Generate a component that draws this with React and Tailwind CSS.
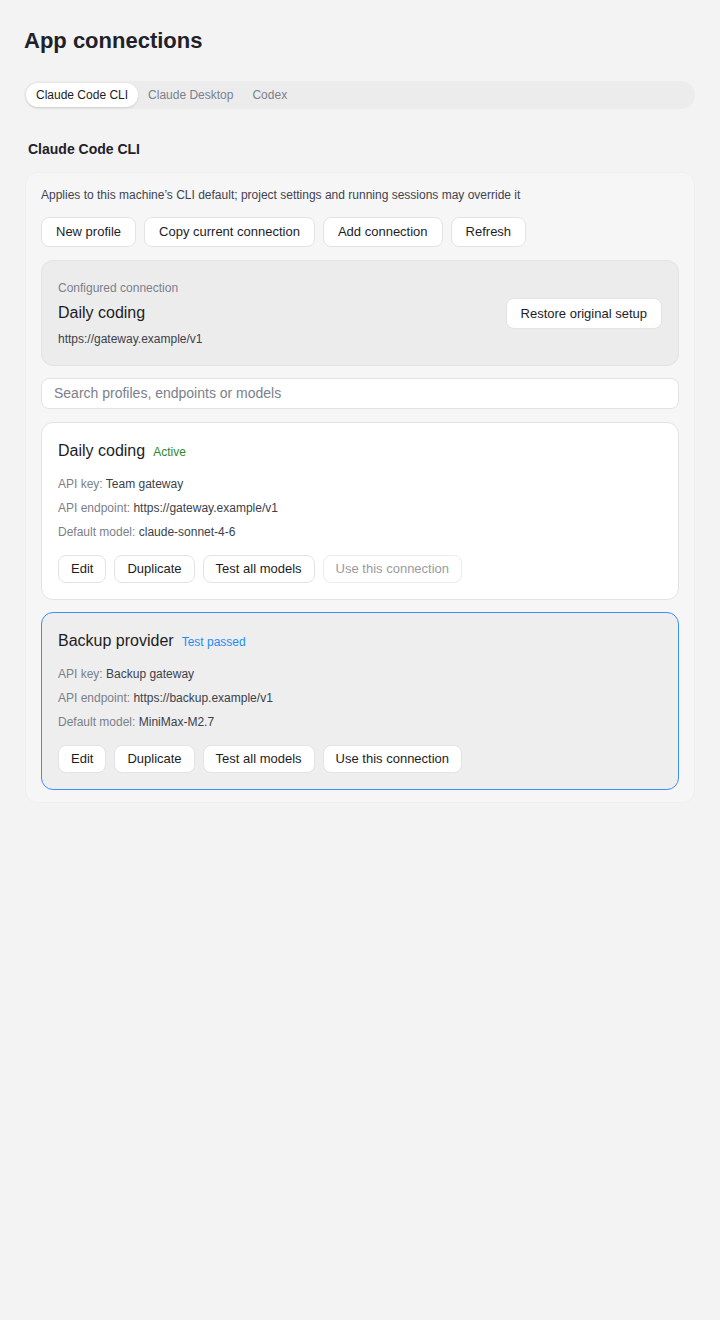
import React from 'react';

const font = { fontFamily: '"Liberation Sans", Arial, sans-serif' };

function Btn({ children }) {
  return (
    <button className="h-[30px] px-[14px] rounded-lg border border-[#e3e3e6] bg-white text-[13px] text-[#1d1d1f]">
      {children}
    </button>
  );
}

function SmallBtn({ children, disabled }) {
  return (
    <button
      className={`h-[28px] px-3 rounded-lg border bg-white text-[13px] ${
        disabled ? 'border-[#ececef] text-[#9a9aa0]' : 'border-[#e3e3e6] text-[#1d1d1f]'
      }`}
    >
      {children}
    </button>
  );
}

function Profile({ name, badge, badgeColor, apiKey, endpoint, model, selected, activeDisabled }) {
  return (
    <div
      className={`rounded-xl border px-4 pt-4 pb-4 ${
        selected ? 'border-[#3d8ef2] bg-[#eeeeee]' : 'border-[#e3e3e6] bg-white'
      }`}
    >
      <div className="flex items-baseline gap-2">
        <span className="text-[16px] text-[#1d1d1f]">{name}</span>
        <span className={`text-[12px] ${badgeColor}`}>{badge}</span>
      </div>
      <div className="mt-[13px] flex flex-col gap-[8px] text-[12px] leading-4">
        <div>
          <span className="text-[#7b7f8a]">API key: </span>
          <span className="text-[#3a3f4b]">{apiKey}</span>
        </div>
        <div>
          <span className="text-[#7b7f8a]">API endpoint: </span>
          <span className="text-[#3a3f4b]">{endpoint}</span>
        </div>
        <div>
          <span className="text-[#7b7f8a]">Default model: </span>
          <span className="text-[#3a3f4b]">{model}</span>
        </div>
      </div>
      <div className="mt-[15px] flex gap-2">
        <SmallBtn>Edit</SmallBtn>
        <SmallBtn>Duplicate</SmallBtn>
        <SmallBtn>Test all models</SmallBtn>
        <SmallBtn disabled={activeDisabled}>Use this connection</SmallBtn>
      </div>
    </div>
  );
}

export default function App() {
  return (
    <div style={font} className="min-h-[1320px] bg-[#f3f3f3] px-6 pt-[27px] pb-10 text-[#1d1d1f]">
      <h1 className="text-[22px] font-bold text-[#1f2128] leading-7">App connections</h1>

      <div className="mt-[26px] mr-[1px] flex items-center gap-[1px] rounded-full bg-[#ececec] p-[2px] h-[28px]">
        <div className="h-[24px] px-[10px] flex items-center rounded-full bg-white text-[12px] text-[#1d1d1f] shadow-sm">
          Claude Code CLI
        </div>
        <div className="h-[24px] px-[9px] flex items-center text-[12px] text-[#7b808c]">Claude Desktop</div>
        <div className="h-[24px] px-[9px] flex items-center text-[12px] text-[#7b808c]">Codex</div>
      </div>

      <h2 className="mt-[30px] ml-1 text-[14px] font-bold text-[#1f2128] leading-5">Claude Code CLI</h2>

      <div className="mt-[13px] mx-[1px] rounded-xl bg-[#f6f6f6] border border-[#efefef] px-[15px] pt-[14px] pb-3">
        <p className="text-[12px] text-[#3e4350] leading-4">
          Applies to this machine’s CLI default; project settings and running sessions may override it
        </p>

        <div className="mt-[14px] flex gap-2">
          <Btn>New profile</Btn>
          <Btn>Copy current connection</Btn>
          <Btn>Add connection</Btn>
          <Btn>Refresh</Btn>
        </div>

        <div className="mt-[13px] rounded-xl border border-[#e3e3e6] bg-[#ececec] px-4 pt-[19px] pb-[18px] flex items-center justify-between">
          <div>
            <div className="text-[12px] text-[#7b808c] leading-4">Configured connection</div>
            <div className="mt-[7px] text-[16px] text-[#1d1d1f] leading-5">Daily coding</div>
            <div className="mt-[8px] text-[12px] text-[#3a3f4b] leading-4">https://gateway.example/v1</div>
          </div>
          <button className="h-[31px] px-[14px] rounded-lg border border-[#e3e3e6] bg-white text-[13px] text-[#1d1d1f]">
            Restore original setup
          </button>
        </div>

        <div className="mt-3 h-[31px] rounded-lg border border-[#e3e3e6] bg-white px-3 flex items-center">
          <span className="text-[14px] text-[#7b808c]">Search profiles, endpoints or models</span>
        </div>

        <div className="mt-[13px] flex flex-col gap-3">
          <Profile
            name="Daily coding"
            badge="Active"
            badgeColor="text-[#2b8a2b]"
            apiKey="Team gateway"
            endpoint="https://gateway.example/v1"
            model="claude-sonnet-4-6"
            activeDisabled
          />
          <Profile
            name="Backup provider"
            badge="Test passed"
            badgeColor="text-[#1e8cf5]"
            apiKey="Backup gateway"
            endpoint="https://backup.example/v1"
            model="MiniMax-M2.7"
            selected
          />
        </div>
      </div>
    </div>
  );
}
